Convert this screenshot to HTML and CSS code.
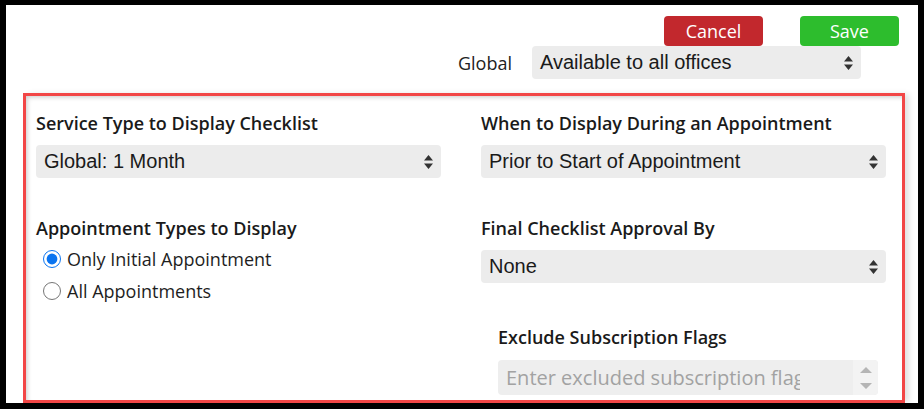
FILE: index.html
```html
<!DOCTYPE html>
<html>
<head>
<meta charset="utf-8">
<link rel="stylesheet" href="styles.css">
</head>
<body>
<div class="screen">
  <div class="header">
    <div class="actions">
      <button class="btn btn-cancel">Cancel</button>
      <button class="btn btn-save">Save</button>
    </div>
    <div class="global-row">
      <span class="global-label">Global</span>
      <div class="select select-global">
        <span class="select-text">Available to all offices</span>
        <svg class="arrows" width="9" height="14" viewBox="0 0 9 14"><path d="M4.5 0 L9 5.5 H0 Z M4.5 14 L9 8.5 H0 Z" fill="#333"/></svg>
      </div>
    </div>
  </div>
  <div class="card">
    <div class="col">
      <div class="label">Service Type to Display Checklist</div>
      <div class="select field">
        <span class="select-text">Global: 1 Month</span>
        <svg class="arrows" width="9" height="14" viewBox="0 0 9 14"><path d="M4.5 0 L9 5.5 H0 Z M4.5 14 L9 8.5 H0 Z" fill="#333"/></svg>
      </div>
      <div class="label label-gap">Appointment Types to Display</div>
      <div class="radios">
        <label class="radio-row"><input type="radio" name="apt" checked class="radio"><span>Only Initial Appointment</span></label>
        <label class="radio-row"><input type="radio" name="apt" class="radio"><span>All Appointments</span></label>
      </div>
    </div>
    <div class="col">
      <div class="label">When to Display During an Appointment</div>
      <div class="select field">
        <span class="select-text">Prior to Start of Appointment</span>
        <svg class="arrows" width="9" height="14" viewBox="0 0 9 14"><path d="M4.5 0 L9 5.5 H0 Z M4.5 14 L9 8.5 H0 Z" fill="#333"/></svg>
      </div>
      <div class="label label-gap">Final Checklist Approval By</div>
      <div class="select field">
        <span class="select-text">None</span>
        <svg class="arrows" width="9" height="14" viewBox="0 0 9 14"><path d="M4.5 0 L9 5.5 H0 Z M4.5 14 L9 8.5 H0 Z" fill="#333"/></svg>
      </div>
      <div class="exclude">
        <div class="label">Exclude Subscription Flags</div>
        <div class="flag-input">
          <span class="placeholder">Enter excluded subscription flags</span>
          <div class="spinner">
            <svg width="12" height="26" viewBox="0 0 12 26"><path d="M6 2 L12 8 H0 Z M6 24 L12 18 H0 Z" fill="#b5b5b5"/></svg>
          </div>
        </div>
      </div>
    </div>
  </div>
</div>
</body>
</html>
```
FILE: styles.css
```css
html, body {
  margin: 0;
  padding: 0;
  background: #000;
  width: 924px;
  height: 409px;
  overflow: hidden;
}
.screen {
  position: relative;
  margin: 5px 0 0 6px;
  width: 912px;
  height: 398px;
  background: #fff;
  overflow: hidden;
  font-family: "Open Sans", sans-serif;
  color: #1b1b1b;
}
.header {
  display: flex;
  flex-direction: column;
  align-items: flex-end;
  padding-top: 11px;
}
.actions {
  display: flex;
  gap: 37px;
  padding-right: 19px;
}
.btn {
  width: 99px;
  height: 30px;
  border: none;
  border-radius: 4px;
  color: #fff;
  font-family: "Open Sans", sans-serif;
  font-size: 18px;
  padding: 0;
  line-height: 30px;
}
.btn-cancel { background: #c2282d; }
.btn-save { background: #2dbd2d; }
.global-row {
  display: flex;
  align-items: center;
  gap: 20px;
  padding-right: 57px;
}
.global-label {
  font-size: 18px;
  color: #222;
}
.select {
  display: flex;
  align-items: center;
  justify-content: space-between;
  height: 33px;
  background: #ececec;
  border-radius: 4px;
  padding: 0 8px 0 8px;
  box-sizing: border-box;
  font-family: "Liberation Sans", Arial, sans-serif;
  font-size: 20px;
  color: #1a1a1a;
}
.select-global { width: 329px; }
.arrows { flex: none; }
.card {
  margin: 14px 0 0 17px;
  width: 882px;
  height: 310px;
  box-sizing: border-box;
  border: 3px solid #f24646;
  box-shadow: inset 3px 3px 5px -2px rgba(0,0,0,0.22), 5px 0 6px -1px rgba(0,0,0,0.12);
  display: grid;
  grid-template-columns: 405px 405px;
  grid-template-rows: auto;
  align-items: start;
  column-gap: 40px;
  padding: 15px 0 0 10px;
}
.col {
  display: flex;
  flex-direction: column;
}
.label {
  font-size: 18px;
  font-weight: 600;
  line-height: 24px;
  color: #1a1a1a;
  white-space: nowrap;
}
.field { margin-top: 10px; }
.label-gap { margin-top: 38px; }
.radios {
  margin-top: 3px;
  display: flex;
  flex-direction: column;
}
.radio-row {
  display: flex;
  align-items: center;
  height: 32px;
  font-size: 18px;
  color: #1e1e1e;
  padding-left: 7px;
  gap: 6px;
}
.radio {
  margin: 0;
  width: 18px;
  height: 18px;
  accent-color: #0a74f0;
}
.exclude {
  margin-top: 42px;
  padding-left: 17px;
  padding-right: 8px;
}
.exclude .label { margin-bottom: 11px; }
.flag-input {
  display: flex;
  height: 35px;
  background: #eeeeee;
  border-radius: 4px;
  overflow: hidden;
}
.placeholder {
  width: 294px;
  margin-left: 8px;
  overflow: hidden;
  white-space: nowrap;
  font-size: 20px;
  line-height: 35px;
  color: #a2a2a2;
}
.spinner {
  margin-left: auto;
  width: 25px;
  background: #f3f3f3;
  display: flex;
  align-items: center;
  justify-content: center;
}
```
